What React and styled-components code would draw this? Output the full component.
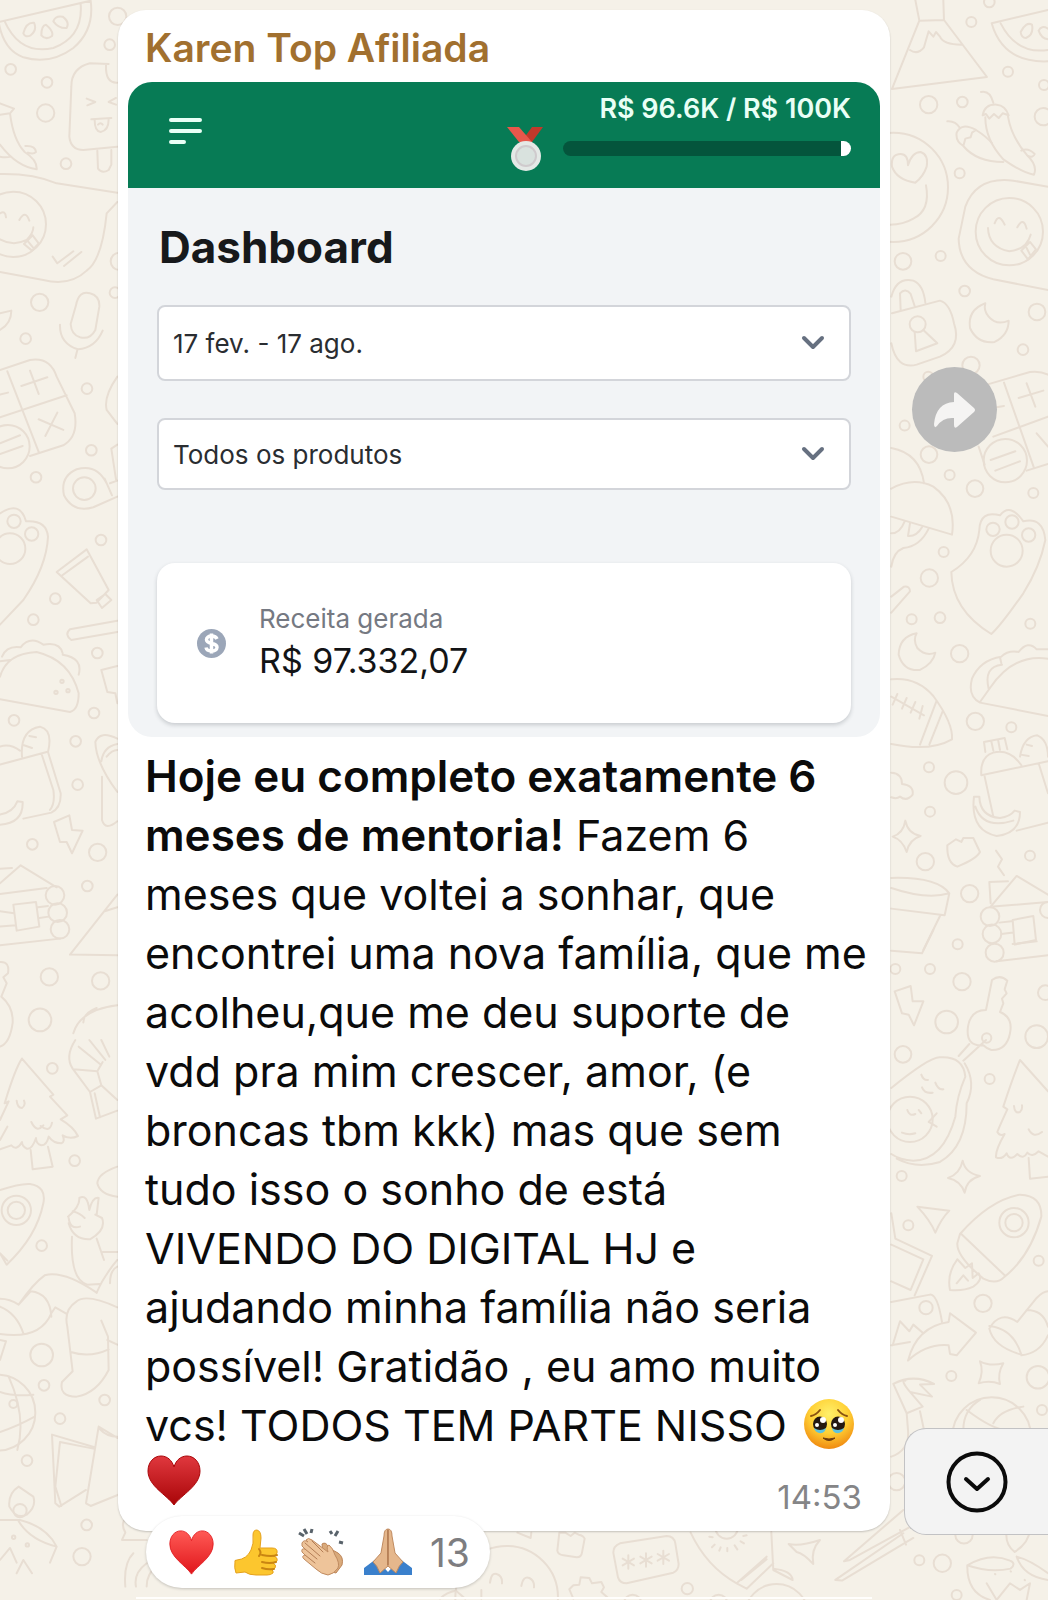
import React from 'react';
import styled, { createGlobalStyle } from 'styled-components';

const GlobalStyle = createGlobalStyle`
  * {
    box-sizing: border-box;
  }

  body {
    margin: 0;
    font-family: Inter, 'Liberation Sans', sans-serif;
    background: #f5f1e8;
    color: #0b0b0b;
  }
`;

const Page = styled.main`
  position: relative;
  min-height: 100vh;
  overflow: hidden;
  padding-top: 10px;
`;

const WallpaperSvg = styled.svg`
  position: absolute;
  inset: 0;
  width: 100%;
  height: 100%;
  fill: none;
  stroke: #e8ded3;
  stroke-width: 6;
  stroke-linecap: round;
  stroke-linejoin: round;
`;

const Chat = styled.div`
  position: relative;
  display: grid;
  grid-template-columns: minmax(0, 1fr) 158px;
  padding-left: 118px;
`;

const Bubble = styled.article`
  background: #fff;
  border-radius: 28px;
  padding: 14px 10px 0;
  box-shadow: 0 1px 2px rgba(0, 0, 0, 0.2);
`;

const Sender = styled.h2`
  margin: 0;
  padding: 0 17px 10px;
  font-size: 39px;
  line-height: 48px;
  font-weight: 600;
  color: #a1702f;
`;

const Media = styled.section`
  background: #f2f4f6;
  border-radius: 24px;
  overflow: hidden;
`;

const TopBar = styled.header`
  display: flex;
  justify-content: space-between;
  height: 106px;
  padding: 13px 29px 0 41px;
  background: #077b55;
`;

const MenuButton = styled.button`
  align-self: flex-start;
  margin-top: 22px;
  padding: 0;
  border: 0;
  background: none;
  line-height: 0;
`;

const Goal = styled.div`
  display: flex;
  align-items: flex-start;
  gap: 20px;

  > svg {
    margin-top: 32px;
  }
`;

const GoalBody = styled.div`
  width: 288px;
`;

const GoalLabel = styled.div`
  text-align: right;
  font-size: 27px;
  line-height: 28px;
  font-weight: 600;
  color: #e9fff6;
`;

const Track = styled.div`
  height: 15px;
  margin-top: 18px;
  border-radius: 8px;
  overflow: hidden;
  background: linear-gradient(to right, #04553c 96.6%, #fff 96.6%);
`;

const Panel = styled.div`
  padding: 32px 29px 14px;
`;

const Title = styled.h1`
  margin: 0 0 30px;
  padding: 0 2px;
  font-size: 44px;
  line-height: 55px;
  font-weight: 700;
  color: #17191b;
`;

const SelectBox = styled.div`
  display: grid;
  align-items: center;
  height: ${(props) => props.$height}px;
  margin-bottom: ${(props) => props.$gap}px;

  > * {
    grid-area: 1 / 1;
  }

  > svg {
    justify-self: end;
    margin-right: 25px;
    pointer-events: none;
  }
`;

const Select = styled.select`
  appearance: none;
  width: 100%;
  height: 100%;
  padding: 0 64px 0 14px;
  border: 2px solid #d3d5da;
  border-radius: 8px;
  background: #fff;
  font: 26px Inter, 'Liberation Sans', sans-serif;
  color: #2a2d31;
`;

const RevenueCard = styled.div`
  display: flex;
  align-items: center;
  gap: 33px;
  height: 160px;
  padding: 0 40px;
  border-radius: 18px;
  background: #fff;
  box-shadow: 0 2px 4px rgba(30, 40, 50, 0.2);
`;

const RevenueLabel = styled.div`
  font-size: 26px;
  line-height: 36px;
  color: #757982;
`;

const RevenueValue = styled.div`
  font-size: 34px;
  line-height: 48px;
  color: #131416;
`;

const Message = styled.p`
  margin: 0;
  padding: 10px 0 0 17px;
  font-size: 43px;
  line-height: 59px;

  svg {
    display: inline-block;
    margin: -8px 0 0 4px;
    vertical-align: -9px;
  }
`;

const Bold = styled.strong`
  font-size: 44px;
  font-weight: 600;
`;

const LastLine = styled.div`
  display: flex;
  justify-content: space-between;
  align-items: flex-start;
  height: 76px;
  padding: 0 18px 0 19px;
`;

const Time = styled.time`
  margin-top: 22px;
  font-size: 33px;
  line-height: 40px;
  color: #858587;
`;

const Side = styled.aside`
  padding: 357px 0 0 22px;
`;

const ForwardButton = styled.button`
  display: grid;
  place-items: center;
  width: 85px;
  height: 85px;
  padding: 0;
  border: 0;
  border-radius: 50%;
  background: #bbbbbb;
`;

const Reactions = styled.button`
  position: relative;
  display: flex;
  align-items: center;
  gap: 18px;
  height: 72px;
  margin: -15px 0 0 146px;
  padding: 0 20px 0 23px;
  border: 0;
  border-radius: 36px;
  background: #fff;
  box-shadow: 0 1px 3px rgba(0, 0, 0, 0.2);
  font: 39px Inter, 'Liberation Sans', sans-serif;
  color: #7d7d80;
`;

const ScrollDown = styled.button`
  position: absolute;
  right: 0;
  bottom: 65px;
  display: grid;
  place-items: center;
  width: 144px;
  height: 107px;
  padding: 0;
  border: 1px solid #c2c2c4;
  border-right: 0;
  border-radius: 22px 0 0 22px;
  background: #f3f3f3;
`;

const NextBubble = styled.div`
  position: relative;
  height: 2px;
  margin: 9px 176px 0 136px;
  background: #fffefc;
`;

// Each group is drawn on a grid three times finer than the page.
const doodles = [
  {
    x: 880,
    y: 0,
    circles: [
      [328, 6, 16], [274, 66, 15], [384, 215, 15], [492, 255, 15], [146, 314, 26], [247, 306, 16],
      [490, 350, 26], [239, 520, 15], [40, 562, 164], [388, 695, 101], [69, 784, 25], [182, 768, 15],
      [254, 873, 16], [471, 936, 25], [429, 1049, 16], [273, 1096, 26], [74, 1277, 15], [147, 1364, 25],
      [209, 1425, 15], [285, 1466, 25], [460, 1479, 15], [376, 1382, 65], [113, 973, 24], [145, 1130, 15],
    ],
    paths: [
      'M106 0 L118 62 L192 60 L190 0 M118 62 L36 267 L321 231 L192 60 M90 150 Q112 166 132 142 Q138 120 146 94 L160 110 L168 96 L180 110 Q190 134 244 134',
      'M335 70 L504 30 M335 70 Q370 190 504 184 M362 70 Q410 164 504 150 M422 96 Q438 64 456 74 Q462 104 438 114 Q424 114 422 96 Z M476 92 Q484 74 504 86 M476 92 Q484 116 504 118',
      'M303 276 Q330 270 340 308 M308 346 Q314 312 350 314 Q376 316 386 346 L368 340 L356 354 L342 342 L328 356 L318 342 Z M316 352 Q316 420 370 478 Q430 520 462 524 Q474 496 440 464 Q394 410 384 350',
      'M202 364 Q226 362 240 384 M288 390 Q244 366 230 398 Q226 424 250 438 L256 416 L272 412 L276 398 Z M250 438 Q290 486 370 486 M288 390 Q320 410 336 430 M424 452 Q444 442 464 462 Q460 474 444 468',
      'M106 548 Q50 540 36 500 Q32 462 62 462 Q84 462 84 496 Q96 456 122 456 Q146 464 140 500 Q130 530 106 548 Z M138 556 Q152 630 100 656 Q70 674 30 674',
      'M504 560 L400 542 Q290 528 256 620 L236 716 Q238 812 340 838 L504 870 M324 684 Q326 742 388 754 Q440 748 452 704 M344 670 Q356 636 374 674 M412 682 Q430 648 440 686 M424 752 L450 726 L468 748 L444 778 Z M440 744 L450 764',
      'M36 940 L180 902 Q210 910 222 970 Q246 1040 180 1070 L110 1094 Q50 1110 34 1030 M34 890 Q50 830 100 842 Q130 854 136 908 M62 930 L60 880 Q76 862 92 882 L104 918 M104 996 L108 1054 L172 1030 L130 990',
      'M316 910 Q262 930 270 984 Q292 1032 344 1026 Q386 1004 386 962 Q350 978 326 950 Q310 932 316 910 Z',
      'M300 1160 L450 1116 Q480 1112 504 1124 M372 1148 L462 1404 M340 1310 L504 1250 M296 1340 L314 1394 M440 1412 L504 1392 M440 1150 L466 1220 M416 1194 L490 1172 M470 1300 L504 1340 M350 1222 L372 1218 M332 1380 L406 1354 M346 1412 L420 1384',
      'M34 1344 Q120 1360 132 1450',
    ],
  },
  {
    x: 880,
    y: 450,
    circles: [
      [148, 384, 26], [191, 306, 15], [95, 508, 15], [180, 503, 16], [239, 611, 26], [451, 521, 15],
      [286, 814, 26], [394, 832, 15], [147, 952, 15], [228, 998, 34], [150, 1085, 15], [136, 1235, 26],
      [269, 1331, 26], [450, 1217, 15], [339, 238, 20], [396, 216, 20], [446, 255, 20],
      [380, 302, 48], [330, 1400, 28], [336, 1452, 28], [504, 1380, 24],
    ],
    paths: [
      'M34 116 Q100 80 160 110 Q230 160 216 254 L34 200 M34 250 Q60 250 74 214 M90 220 L84 258 Q110 260 126 232 M146 236 Q120 290 70 294 Q40 306 34 350',
      'M34 440 L72 410 Q90 408 90 424 L34 488',
      'M214 366 Q290 320 298 240 Q300 180 360 196 Q390 156 430 214 Q490 200 496 270 Q480 350 430 430 Q360 530 334 552 Q216 480 214 366 Z',
      'M110 550 Q58 560 56 614 Q70 664 120 660 Q160 640 166 608 Q136 620 112 594 Q98 570 110 550 Z',
      'M34 688 Q110 680 160 738 Q220 820 216 868 Q150 906 34 882 M170 752 L120 884 M188 784 L148 884 M34 740 L132 796 M52 732 L38 764 M80 744 L66 776 M106 756 L92 788 M128 768 L118 806',
      'M504 798 L300 758 Q262 738 276 686 Q300 630 364 620 Q384 600 416 606 Q444 570 470 598 L504 598 M300 756 L330 714 Q400 610 504 626 M326 716 Q310 650 366 644 M364 640 L360 622',
      'M304 976 Q300 920 340 908 Q390 896 424 946 M304 976 L504 934 M314 980 L340 1100 M316 906 L312 876 L374 864 L382 898 M334 874 L340 902 M354 868 L360 900 M420 920 Q430 860 472 856 Q504 870 504 920 M422 914 L446 918 M440 884 L456 888 M476 940 L504 1030 M410 1142 L504 1118',
      'M282 1040 L298 1040 Q300 1100 360 1104 Q390 1100 404 1082 L420 1086 Q420 1150 350 1158 Q270 1142 282 1040 Z M286 1070 Q310 1140 400 1112',
      'M34 968 Q66 970 66 1002 Q102 1006 98 1034 Q80 1056 60 1040 Q50 1048 34 1042',
      'M76 1112 Q84 1152 122 1158 Q88 1168 80 1206 Q68 1170 38 1160 Q70 1150 76 1112 Z',
      'M202 1186 L228 1168 L244 1176 L250 1164 L280 1164 L300 1206 Q290 1226 232 1250 Q200 1240 202 1186 Z M348 1202 L366 1228 L354 1250 L372 1276',
      'M34 1284 Q170 1280 208 1330 Q140 1350 34 1314 M208 1330 L194 1396 L34 1376 M180 1398 L130 1500',
      'M332 1360 L328 1296 L384 1294 M332 1370 L410 1278 L504 1334 M340 1370 L504 1356 M398 1410 L460 1398 L468 1470 L404 1484 Z M358 1418 L394 1414 M364 1452 L400 1448',
    ],
  },
  {
    x: 880,
    y: 930,
    circles: [
      [233, 43, 15], [46, 117, 15], [150, 117, 15], [246, 155, 26], [200, 276, 34], [496, 188, 22],
      [69, 373, 25], [329, 447, 15], [470, 320, 34], [65, 738, 15], [85, 886, 15], [476, 992, 15],
      [309, 1120, 26], [138, 1133, 20], [214, 1338, 15], [474, 1342, 34], [486, 1440, 15], [402, 878, 44],
      [402, 878, 26], [90, 568, 68], [320, 324, 14], [344, 68, 27], [252, 1815, 26],
      [118, 1891, 15], [187, 1900, 26], [230, 1995, 15], [50, 1655, 26], [335, 1520, 118],
    ],
    paths: [
      'M34 62 L126 70 L160 0 M398 42 L470 34 M350 94 L504 76',
      'M44 184 L92 168 L98 214 L130 214 L102 286 L86 254 L66 250 Z',
      'M318 240 L336 150 Q360 132 382 152 L374 178 L380 190 L366 206 L370 220 L360 246 Q400 262 390 310 Q380 362 334 360 Q320 356 310 346 Q256 350 264 290 Q272 240 318 240 Z M318 330 L250 392 M268 342 L236 378',
      'M34 474 Q150 380 180 382 Q250 378 256 440 Q230 500 226 560 Q190 690 100 692 Q60 690 34 672 M254 400 Q290 460 260 520 Q260 650 180 696 Q110 718 50 686 M124 434 Q130 452 144 450 M166 458 Q174 480 190 478 M126 472 Q134 492 158 488 M82 540 Q88 560 106 552 M116 540 L124 550 M66 608 Q86 616 106 610 M146 576 L170 550 M146 576 L170 590',
      'M504 484 L420 390 Q396 450 370 530 L382 538 Q358 590 352 606 Q360 620 374 612 Q346 660 348 682 Q366 690 380 670 Q390 696 412 672 Q430 690 442 668 Q456 684 476 664 L504 680 M446 684 L450 746 L504 740 M402 528 Q404 552 420 546 Q428 540 426 526 M446 598 Q460 626 486 606',
      'M248 692 Q256 730 300 738 Q260 748 254 788 Q242 752 204 744 Q240 732 248 692 Z M112 830 L208 842 Q184 866 166 908 Q150 870 112 830 Z',
      'M240 912 Q330 810 420 794 Q486 796 484 860 Q450 980 374 1040 Q350 1066 310 1046 Q230 980 232 940 Z M244 912 L374 1036 M232 988 Q200 1030 210 1080 Q250 1084 280 1070 Q310 1050 296 1030 L278 1044 L276 1000 L256 1014 Z M230 1060 L250 1036 L264 1052',
      'M34 850 L46 926 L156 978 L104 1096 M34 944 L130 988 L92 1080 L34 1054 M34 1116 L150 1094 Q172 1092 186 1176 M38 1246 L60 1174 L88 1204 L100 1184 L130 1210 M34 1246 L90 1236',
      'M84 1292 Q110 1190 206 1176 L210 1150 L288 1208 L230 1276 L210 1272 L206 1246 Q140 1240 84 1292 Z',
      'M328 1196 Q360 1140 412 1176 L470 1104 Q490 1084 504 1084 M328 1196 Q340 1250 424 1274 Q400 1196 328 1188 M424 1276 Q480 1270 504 1216 M440 1140 Q490 1140 504 1190',
      'M300 1294 Q330 1310 370 1300 Q352 1330 360 1362 Q330 1350 296 1360 Q312 1324 300 1294 Z',
      'M40 1362 Q100 1330 162 1362 L120 1364 L156 1400 L90 1386 Q60 1350 76 1352 M40 1362 L80 1450 L128 1430 L90 1386 M80 1450 L84 1500 Q90 1560 34 1580 M120 1444 L132 1500 M250 1500 Q250 1440 300 1410 M260 1440 Q340 1500 380 1500 M340 1480 Q360 1440 430 1430',
      'M-108 1894 L70 1740 M-108 1894 L-90 1890 L92 1790 M-134 1950 L70 1810 M-134 1950 L-114 1952 L100 1824 M60 1800 L78 1844',
      'M262 1906 Q330 1866 390 1892 Q410 1900 392 1916 Q330 1930 262 1906 Z M262 1906 Q260 1990 330 2010 M410 1880 Q450 1890 504 1930 M410 1880 Q430 1940 504 1950 M382 1790 Q370 1840 404 1866 Q446 1840 450 1800 M320 1960 L350 2010 L390 1960 L420 1980 L450 1960 L440 2010 M345 1932 L346 1933 M392 1924 L393 1925 M434 1950 L435 1951',
    ],
  },
  {
    x: 440,
    y: 1520,
    circles: [[742, 206, 17], [860, 22, 34], [1010, 288, 96], [200, 232, 154], [836, 250, 26], [578, 250, 26]],
    paths: [
      'M232 38 L272 54 L274 38 M358 38 L352 92 Q354 104 370 106 L410 112 Q424 112 426 98 L434 56 Q430 46 416 44 L404 38 L392 48 L376 38 Z',
      'M540 70 L680 48 Q702 48 706 70 L716 132 Q716 150 700 158 L560 190 Q540 190 534 172 L520 98 Q520 78 540 70 Z',
      'M565 106 V146 M548 116 L582 136 M582 116 L548 136 M618 100 V140 M601 110 L635 130 M635 110 L601 130 M670 92 V132 M653 102 L687 122 M687 102 L653 122',
      'M752 38 Q800 140 890 190 L980 110 M890 190 L920 206 L1000 130 M904 180 L980 118 M994 36 L1000 150 L1058 180 Q1056 152 1000 146 M808 50 L818 52 M816 82 L824 74 M838 92 L842 82 M862 94 V84 M892 88 L884 76 M912 70 L902 64 M920 46 L910 48',
      'M1046 72 Q1080 80 1140 60 Q1112 90 1120 132 Q1090 100 1070 96 Z',
      'M150 188 Q154 156 170 162 Q188 168 186 190 M244 198 Q250 166 268 174 Q284 182 282 202 M124 210 V236 M400 236 L388 208 L400 196 L418 194 L422 172 L448 174 L456 190 L484 186 L492 202 L484 216 L502 232 M0 236 Q20 216 48 212 L76 236',
    ],
  },
  {
    x: 0,
    y: 0,
    circles: [
      [353, 49, 26], [329, 134, 16], [32, 208, 16], [141, 247, 16], [137, 339, 26], [198, 491, 16],
      [40, 673, 98], [119, 907, 26], [77, 1016, 16], [261, 1166, 16], [274, 1351, 16], [108, 1432, 16],
      [253, 1466, 34], [24, 1340, 65], [358, 784, 26], [345, 878, 16],
    ],
    paths: [
      'M-4 66 L272 2 Q284 90 220 144 Q150 196 70 172 Q10 150 -4 66 Z M14 64 Q60 166 160 144 Q250 110 242 12 M70 100 Q78 66 102 68 Q112 90 92 106 Q76 114 70 100 Z M124 106 Q124 76 138 74 Q162 94 156 108 Q138 122 124 106 Z M160 64 Q166 46 188 50 Q210 66 200 84 Q176 86 160 64 Z',
      'M0 310 L42 326 L30 340 L0 344 M30 340 Q40 420 74 456 Q112 480 110 508 Q50 500 0 434 M0 470 Q16 474 32 470 M76 438 Q106 436 108 456 Q100 464 84 458',
      'M326 192 L270 190 Q214 204 214 260 L208 410 Q212 450 250 450 L352 440 M318 196 Q316 250 352 248 M292 452 L294 506 Q306 522 326 510 L334 494 L334 450 M260 296 L286 306 L262 316 M348 294 L326 306 L348 314 M274 358 L334 354 M284 360 Q284 394 302 396 Q326 392 326 358 M294 374 Q302 366 308 374',
      'M0 522 Q100 520 170 550 L352 578 M352 606 L320 640 Q306 780 260 812 Q210 860 130 840 L0 816 M0 640 Q16 630 18 652 M58 660 Q76 628 88 662 M0 718 Q40 740 80 720 Q100 700 100 682 M72 732 L98 706 L116 730 L96 752 Z M84 724 L100 744 M158 770 L172 790 L220 754 M192 798 L244 756',
      'M0 940 L34 932 Q34 970 0 990 M228 916 Q236 870 270 880 Q300 888 298 920 L286 990 Q270 1020 240 1012 Q214 1004 212 972 Z M180 974 Q178 1030 234 1048 Q286 1044 308 992 M232 1050 L226 1074',
      'M0 1110 L90 1080 Q150 1070 170 1130 L224 1240 Q236 1310 190 1336 L90 1368 M22 1114 L116 1356 M0 1252 L200 1186 M90 1112 L116 1182 M64 1158 L142 1132 M116 1258 L190 1290 M172 1238 L136 1308 M0 1184 L24 1178 M0 1330 L60 1306 M0 1362 L68 1338',
      'M320 1450 Q290 1390 230 1408 Q180 1430 192 1486 Q220 1540 280 1522 L352 1490 M314 1436 L336 1486 M330 1450 L352 1442 M352 1130 Q310 1190 320 1230 L352 1272 M348 1438 L334 1346 L352 1334',
    ],
  },
  {
    x: 0,
    y: 500,
    circles: [
      [303, 120, 16], [166, 296, 16], [100, 359, 16], [292, 459, 16], [282, 639, 16], [42, 661, 16],
      [227, 724, 16], [233, 854, 16], [97, 1033, 16], [293, 1057, 26], [262, 1158, 16], [148, 1431, 26],
      [302, 1443, 26], [120, 1560, 34], [42, 64, 20], [95, 102, 20], [30, 146, 46], [165, 1186, 28],
      [173, 1238, 28], [180, 1288, 28], [186, 544, 5], [168, 577, 5], [204, 572, 5],
    ],
    paths: [
      'M0 40 Q60 0 78 64 Q140 60 144 110 Q140 200 70 300 L0 374',
      'M260 148 L170 216 L272 310 L290 308 L326 270 Z M264 170 L184 228 M290 300 L316 282 L334 300 L306 324 Z M352 362 L210 388 Q192 404 214 420 L352 396',
      'M0 598 L210 636 Q236 630 236 580 Q210 480 110 456 Q20 460 0 530 M6 470 Q20 436 62 442 Q90 406 130 434 Q180 424 188 460 M188 464 Q250 474 236 524 M0 484 L30 480',
      'M0 740 Q30 730 60 752 M0 794 L140 756 M66 770 Q60 690 120 680 Q160 690 144 756 M72 736 L96 744 M88 708 L108 712 M126 766 L160 870 Q166 910 150 930 M144 756 L182 880 Q184 924 154 938 L70 956 M0 944 Q40 936 52 904 L68 906 Q70 970 0 974',
      'M352 498 L304 510 L322 576 L346 580 L352 610 M352 716 Q300 690 286 726 Q288 790 352 876 M304 784 Q310 740 352 732 M306 830 L306 960 Q316 994 352 964 M320 770 Q336 750 352 750',
      'M162 966 L208 946 L216 990 L248 992 L216 1060 L200 1026 L180 1026 Z',
      'M0 1150 L62 1096 L170 1162 M0 1182 L140 1164 M40 1214 L108 1206 L118 1280 L50 1292 Z M0 1336 L180 1316 M114 1222 L144 1218 M118 1254 L146 1250 M0 1106 L36 1104 M0 1234 L42 1240 M0 1280 L48 1276',
      'M352 1184 L210 1364 L352 1366 M314 1234 L352 1222 M0 1386 Q30 1384 24 1420 L10 1432 L20 1450 L4 1490 Q40 1520 38 1568 Q30 1630 0 1640 M220 1600 Q240 1530 352 1516 M250 1568 Q250 1540 290 1524',
    ],
  },
  {
    x: 0,
    y: 1040,
    circles: [
      [157, 85, 16], [224, 362, 16], [49, 511, 44], [49, 511, 26], [125, 617, 16], [125, 945, 34],
      [132, 1036, 16], [180, 1136, 16], [314, 1080, 16], [81, 1262, 16], [260, 1455, 16], [246, 1550, 26],
      [-8, 1118, 114], [40, 1092, 12], [41, 1492, 5], [82, 1515, 5], [60, 1412, 20],
    ],
    paths: [
      'M66 56 Q46 84 14 190 L26 184 L0 240 M66 56 L160 164 L150 170 L202 226 L182 238 Q220 260 234 288 Q210 300 188 286 Q196 306 184 310 Q160 310 146 290 Q140 316 124 316 Q108 312 108 294 Q96 330 80 326 Q66 318 66 306 Q50 334 34 316 L0 328 M22 260 L0 300 M92 330 L98 388 L158 380 L144 320 M50 182 Q52 204 66 204 Q78 196 72 182 M94 246 Q110 280 130 256 M122 258 Q150 280 156 248',
      'M226 0 Q194 50 218 86 L270 156 L288 236 L352 212 M270 156 L304 136 L352 180 M220 88 L292 94 L308 66 M236 20 L300 72 M268 0 L316 60 M304 136 L292 94 M284 160 L300 232 M304 0 L328 50',
      'M0 450 Q60 430 90 432 Q140 440 130 490 Q110 590 20 674 L0 640 M0 640 L22 662',
      'M204 530 Q240 500 238 474 Q262 460 268 510 Q278 470 296 474 L290 524 M206 534 Q210 570 240 560 M218 514 Q240 520 254 534 M206 550 Q220 600 270 598 Q320 570 306 534 L286 524 M216 590 Q210 720 262 734 L298 732 M290 596 L312 660 M308 636 L352 636 M352 380 Q294 400 292 430 Q300 464 352 470 M290 758 Q310 710 352 660 M330 730 Q330 690 352 680',
      'M0 776 Q30 776 56 794 Q100 730 134 706 Q190 690 290 758 M0 882 Q120 900 154 820 L166 802 L200 822 M56 794 L92 754 Q150 760 154 830 M0 800 Q50 820 70 880 M352 802 Q260 760 230 784 Q190 810 202 860 L218 994 L186 1026 Q176 1070 230 1070 Q290 1060 326 990 L324 890 L304 842 M212 936 Q270 954 326 928 M322 900 L352 914',
      'M0 1056 Q40 1070 100 1064 M0 1176 Q50 1160 104 1130 M26 1010 Q80 1130 52 1230 M0 900 L18 904 L0 960',
      'M156 1184 L284 1222 M156 1184 L166 1390 L178 1400 L258 1350 M180 1206 L166 1340 L184 1398 M180 1206 L280 1226 M296 1160 L258 1390 L272 1398 L390 1350 M296 1160 L352 1194 M300 1168 Q320 1190 352 1190',
      'M56 1340 Q24 1360 28 1400 Q50 1440 80 1424 Q110 1400 100 1370 Z M0 1440 L60 1440 Q140 1460 170 1520 L150 1568 M56 1444 Q90 1500 170 1520 M0 1560 L30 1524 L50 1568 M50 1600 L70 1560 L96 1600',
      'M380 1432 Q360 1450 376 1478 L366 1500 L440 1500 M400 1540 Q370 1570 376 1640 M408 1640 Q400 1600 440 1570 M440 1640 Q440 1600 470 1580',
    ],
  },
];

const Wallpaper = () => (
  <WallpaperSvg viewBox="0 0 1048 1600" preserveAspectRatio="xMidYMin slice" aria-hidden="true">
    {doodles.map(({ x, y, circles, paths }) => (
      <g key={`${x}-${y}`} transform={`translate(${x} ${y}) scale(0.3333)`}>
        {circles.map(([cx, cy, r]) => (
          <circle key={`${cx}-${cy}-${r}`} cx={cx} cy={cy} r={r} />
        ))}
        {paths.map((d) => (
          <path key={d} d={d} />
        ))}
      </g>
    ))}
  </WallpaperSvg>
);

const MenuIcon = () => (
  <svg width="34" height="28" viewBox="0 0 34 28" stroke="#e9fff6" strokeWidth="4" strokeLinecap="round">
    <path d="M2 3H31M2 14H31M2 25H15" />
  </svg>
);

const Medal = () => (
  <svg width="36" height="44" viewBox="0 0 36 44" role="img" aria-label="Medalha">
    <path d="M36 0H25L14 15H25Z" fill="#c0392b" />
    <path d="M0 0H12L25 15H12Z" fill="#e8574b" />
    <circle cx="19" cy="29" r="15" fill="#e4e9e6" />
    <circle cx="19" cy="29" r="10" fill="#d9e2de" stroke="#cfcbcd" strokeWidth="2" />
  </svg>
);

const Chevron = () => (
  <svg width="26" height="18" viewBox="0 0 26 18" fill="none" stroke="#667080" strokeWidth="4" strokeLinecap="round" strokeLinejoin="round">
    <path d="M4 4L13 13L22 4" />
  </svg>
);

const DollarIcon = () => (
  <svg width="29" height="29" viewBox="0 0 29 29" aria-hidden="true">
    <circle cx="14.5" cy="14.5" r="14.5" fill="#9ba6b8" />
    <path
      d="M20 10C19 7.500 17 7 14.500 7C11.500 7 9.500 8.500 9.500 10.800C9.500 16 20 12.800 20 18.200C20 20.500 17.500 22 14.500 22C11.500 22 9.500 20.800 9 18.500M14.500 4.500V24.500"
      fill="none"
      stroke="#fff"
      strokeWidth="3.500"
    />
  </svg>
);

const heartPath =
  'M27 50C20 40 1 31 1 16C1 7 7 1 14 1C20 1 25 5 27 12C29 5 34 1 40 1C47 1 53 7 53 16C53 31 34 40 27 50Z';

const Heart = ({ id, width, height, from, to }) => (
  <svg width={width} height={height} viewBox="0 0 54 51" preserveAspectRatio="none" role="img" aria-label="Coração">
    <defs>
      <linearGradient id={id} x1="0" y1="0" x2="0" y2="1">
        <stop offset="0" stopColor={from} />
        <stop offset="1" stopColor={to} />
      </linearGradient>
    </defs>
    <path d={heartPath} fill={`url(#${id})`} stroke={to} strokeWidth="1" />
  </svg>
);

const HoldingTears = () => (
  <svg width="52" height="52" viewBox="0 0 52 52" role="img" aria-label="Rosto segurando as lágrimas">
    <defs>
      <radialGradient id="face" cx="0.5" cy="0.3" r="0.7">
        <stop offset="0" stopColor="#fff06a" />
        <stop offset="0.55" stopColor="#ffd035" />
        <stop offset="1" stopColor="#f08a10" />
      </radialGradient>
    </defs>
    <circle cx="26" cy="26" r="25" fill="url(#face)" />
    <ellipse cx="17" cy="26" rx="7" ry="7.500" fill="#241811" />
    <ellipse cx="35" cy="26" rx="7" ry="7.500" fill="#241811" />
    <path d="M11 30Q17 34 23 30Q22 36 16 35Q12 34 11 30ZM29 30Q35 34 41 30Q40 34 36 35Q30 36 29 30Z" fill="#5fc3dd" />
    <g fill="#fff">
      <circle cx="20" cy="22" r="3" />
      <circle cx="38" cy="22" r="3" />
      <circle cx="14" cy="27" r="2" />
      <circle cx="32" cy="27" r="2" />
    </g>
    <path d="M8 18Q13 17 17 12M44 18Q39 17 35 12" fill="none" stroke="#8a5210" strokeWidth="2" strokeLinecap="round" />
    <path d="M20 40Q26 45 32 40Q26 42 20 40Z" fill="#6e3c0c" stroke="#6e3c0c" />
  </svg>
);

const ThumbsUp = () => (
  <svg width="48" height="48" viewBox="0 0 48 48" role="img" aria-label="Positivo">
    <path
      d="M3 34Q2 32 5 32Q15 31 19 22Q22 16 21 7Q21 2 25 2Q29 3 29 10L28 20H40Q46 20 45 25Q44 28 41 28Q46 29 45 33Q44 35 41 35Q45 37 43 40Q42 42 39 41Q42 43 41 45Q39 47 35 47H24Q17 47 13 44L4 45Q2 40 3 34Z"
      fill="#fcc62e"
      stroke="#e5a11c"
    />
    <path d="M45 27Q40 29 30 27M44 34Q38 36 30 34M42 41Q36 42 30 40M27 21Q30 25 27 28" fill="none" stroke="#c98512" strokeWidth="2" strokeLinecap="round" />
  </svg>
);

const Clap = () => (
  <svg width="48" height="48" viewBox="0 0 48 48" role="img" aria-label="Palmas">
    <path d="M24 16Q28 13 31 20L40 25Q46 29 44 37L38 45L27 42Z" fill="#d9aa7b" stroke="#bd8457" />
    <path
      d="M4 15Q6 11 10 14L8 12Q10 9 14 12L30 24Q28 18 31 17Q35 20 37 27Q42 35 40 40Q36 46 30 47Q23 46 18 41L6 31Q3 28 7 27L4 24Q3 20 7 21L4 18Z"
      fill="#eec49a"
      stroke="#c08b60"
    />
    <path d="M7 15L22 28M7 21L19 31M7 27L17 35M14 13L25 24" fill="none" stroke="#b37d55" strokeLinecap="round" />
    <path d="M6 8L1 5M9 6L6 1M13 5L14 1M34 6L32 3M37 8L40 3M41 14L45 15" stroke="#59636b" strokeWidth="3" />
  </svg>
);

const Pray = () => (
  <svg width="48" height="48" viewBox="0 0 48 48" role="img" aria-label="Mãos juntas">
    <path d="M0 40L12 31L24 44L36 31L48 40V47H0Z" fill="#3a80cc" />
    <path d="M24 1Q20 1 20 8L17 25L9 34Q13 37 16 45L24 38Z" fill="#e5b78c" stroke="#c08b60" />
    <path d="M24 1Q28 1 28 8L31 25L39 34Q35 37 32 45L24 38Z" fill="#e5b78c" stroke="#c08b60" />
    <path d="M24 2V37" stroke="#a46d45" />
  </svg>
);

const ForwardArrow = () => (
  <svg width="41" height="36" viewBox="0 0 41 36" fill="#f5f4f3" aria-hidden="true">
    <path d="M20 2Q20-1 23 1L40 16Q42 18 40 20L23 35Q20 37 20 33V26Q9 25 3 34Q0 37 0 32Q2 11 20 10Z" />
  </svg>
);

const DownCircle = () => (
  <svg width="62" height="62" viewBox="0 0 62 62" fill="none" stroke="#0b0b0b" strokeWidth="4" strokeLinecap="round" strokeLinejoin="round">
    <circle cx="31" cy="31" r="28.500" />
    <path d="M20 28L31 38L42 28" />
  </svg>
);

export default function App() {
  return (
    <>
      <GlobalStyle />
      <Page>
        <Wallpaper />
        <Chat>
          <Bubble>
            <Sender>Karen Top Afiliada</Sender>
            <Media>
              <TopBar>
                <MenuButton aria-label="Menu">
                  <MenuIcon />
                </MenuButton>
                <Goal>
                  <Medal />
                  <GoalBody>
                    <GoalLabel id="goal">R$ 96.6K / R$ 100K</GoalLabel>
                    <Track role="progressbar" aria-labelledby="goal" aria-valuenow={97} />
                  </GoalBody>
                </Goal>
              </TopBar>
              <Panel>
                <Title>Dashboard</Title>
                <SelectBox $height={76} $gap={37}>
                  <Select aria-label="Período">
                    <option>17 fev. - 17 ago.</option>
                  </Select>
                  <Chevron />
                </SelectBox>
                <SelectBox $height={72} $gap={73}>
                  <Select aria-label="Produtos">
                    <option>Todos os produtos</option>
                  </Select>
                  <Chevron />
                </SelectBox>
                <RevenueCard>
                  <DollarIcon />
                  <div>
                    <RevenueLabel>Receita gerada</RevenueLabel>
                    <RevenueValue>R$ 97.332,07</RevenueValue>
                  </div>
                </RevenueCard>
              </Panel>
            </Media>
            <Message>
              <Bold>
                Hoje eu completo exatamente 6<br />
                meses de mentoria!
              </Bold>{' '}
              Fazem 6<br />
              meses que voltei a sonhar, que
              <br />
              encontrei uma nova família, que me
              <br />
              acolheu,que me deu suporte de
              <br />
              vdd pra mim crescer, amor, (e<br />
              broncas tbm kkk) mas que sem
              <br />
              tudo isso o sonho de está
              <br />
              VIVENDO DO DIGITAL HJ e<br />
              ajudando minha família não seria
              <br />
              possível! Gratidão , eu amo muito
              <br />
              vcs! TODOS TEM PARTE NISSO <HoldingTears />
            </Message>
            <LastLine>
              <Heart id="darkHeart" width={54} height={51} from="#e0383e" to="#a90508" />
              <Time>14:53</Time>
            </LastLine>
          </Bubble>
          <Side>
            <ForwardButton aria-label="Encaminhar">
              <ForwardArrow />
            </ForwardButton>
          </Side>
        </Chat>
        <Reactions>
          <Heart id="redHeart" width={45} height={45} from="#ff5a55" to="#e0161b" />
          <ThumbsUp />
          <Clap />
          <Pray />
          <span>13</span>
        </Reactions>
        <NextBubble />
        <ScrollDown aria-label="Ir para o fim">
          <DownCircle />
        </ScrollDown>
      </Page>
    </>
  );
}
